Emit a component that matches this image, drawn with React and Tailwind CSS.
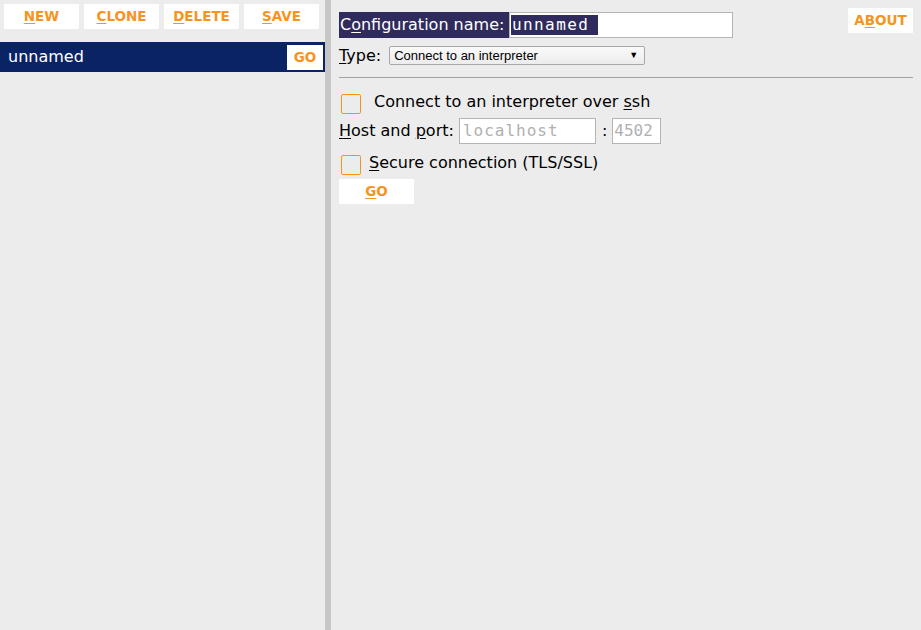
import React from "react";

const orange = "text-[#f7941d]";

function Btn({ first, rest, className = "" }) {
  return (
    <div
      className={`flex h-[25px] items-center justify-center bg-white text-[13.5px] font-bold ${orange} ${className}`}
    >
      <span className="underline underline-offset-2">{first}</span>
      <span>{rest}</span>
    </div>
  );
}

export default function App() {
  return (
    <div
      className="flex h-[630px] w-[921px] bg-[#ececec] text-black"
      style={{ fontFamily: '"DejaVu Sans", sans-serif' }}
    >
      {/* left: configurations list */}
      <div className="w-[325px] shrink-0">
        <div className="flex gap-[5px] pl-[4px] pt-[4px]">
          <Btn first="N" rest="EW" className="w-[75px]" />
          <Btn first="C" rest="LONE" className="w-[75px]" />
          <Btn first="D" rest="ELETE" className="w-[75px]" />
          <Btn first="S" rest="AVE" className="w-[75px]" />
        </div>
        <div className="mt-[13px] flex h-[30px] items-center justify-between bg-[#0a2364] pl-[8px] pr-[2px]">
          <span className="text-[16px] text-white">unnamed</span>
          <div className={`flex h-[25px] w-[36px] items-center justify-center bg-white text-[13.5px] font-bold ${orange}`}>
            GO
          </div>
        </div>
      </div>

      {/* divider */}
      <div className="w-[6px] shrink-0 bg-[#c6c6c6]" />

      {/* right: config editor */}
      <div className="flex-1 px-[8px] pt-[8px]">
        <div className="flex items-start justify-between">
          <div className="pt-[4px]">
            <div className="flex h-[26px] items-stretch">
              <div className="flex w-[170px] shrink-0 items-center bg-[#2f2b5c] pl-[1px] text-[16px] text-white">
                C<span className="underline underline-offset-2">o</span>nfiguration name:
              </div>
              <div className="flex w-[224px] shrink-0 items-center border border-[#b4b4b4] bg-white pl-[1px]">
                <span
                  className="bg-[#2f2b5c] px-[1px] pr-[9px] text-[16px] leading-[20px] tracking-[1.4px] text-white"
                  style={{ fontFamily: '"DejaVu Sans Mono", monospace' }}
                >
                  unnamed
                </span>
              </div>
            </div>
            <div className="mt-[8px] flex h-[19px] items-center gap-[8px]">
              <span className="text-[16px]">
                <span className="underline underline-offset-2">T</span>ype:
              </span>
              <div
                className="flex h-[19px] w-[256px] items-center justify-between rounded-[2px] border border-[#a8a8a8] bg-gradient-to-b from-[#fafafa] to-[#ececec] pl-[4px] pr-[6px] text-[13px]"
                style={{ fontFamily: '"Liberation Sans", Arial, sans-serif' }}
              >
                <span>Connect to an interpreter</span>
                <span className="text-[9px]">▼</span>
              </div>
            </div>
          </div>
          <div className={`flex h-[25px] w-[65px] items-center justify-center bg-white text-[13.5px] font-bold ${orange}`}>
            A<span className="underline underline-offset-2">B</span>OUT
          </div>
        </div>

        <div className="mt-[12px] h-px bg-[#a2a2a2]" />

        <div className="mt-[16px] flex h-[20px] items-center">
          <div className="ml-[2px] h-[20px] w-[20px] rounded-[2px] border border-[#f7941d]" />
          <span className="relative -top-[2px] ml-[13px] text-[16px]">
            Connect to an interpreter over <span className="underline underline-offset-2">s</span>sh
          </span>
        </div>

        <div className="mt-[4px] flex h-[26px] items-center">
          <span className="text-[16px]">
            <span className="underline underline-offset-2">H</span>ost and <span className="underline underline-offset-2">p</span>ort:
          </span>
          <div
            className="ml-[5px] flex h-[26px] w-[137px] items-center border border-[#b4b4b4] bg-white pl-[3px] text-[16px] tracking-[1px] text-[#b0b0b0]"
            style={{ fontFamily: '"DejaVu Sans Mono", monospace' }}
          >
            localhost
          </div>
          <span className="ml-[6px] mr-[5px] text-[16px]">:</span>
          <div
            className="flex h-[26px] w-[49px] items-center border border-[#b4b4b4] bg-white pl-[1px] text-[16px] text-[#b0b0b0]"
            style={{ fontFamily: '"DejaVu Sans Mono", monospace' }}
          >
            4502
          </div>
        </div>

        <div className="mt-[11px] flex h-[20px] items-center">
          <div className="ml-[2px] h-[20px] w-[20px] rounded-[2px] border border-[#f7941d]" />
          <span className="relative -top-[2px] ml-[8px] text-[16px]">
            <span className="underline underline-offset-2">S</span>ecure connection (TLS/SSL)
          </span>
        </div>

        <div className={`mt-[4px] flex h-[25px] w-[75px] items-center justify-center bg-white text-[13.5px] font-bold ${orange}`}>
          <span className="underline underline-offset-2">G</span>O
        </div>
      </div>
    </div>
  );
}
